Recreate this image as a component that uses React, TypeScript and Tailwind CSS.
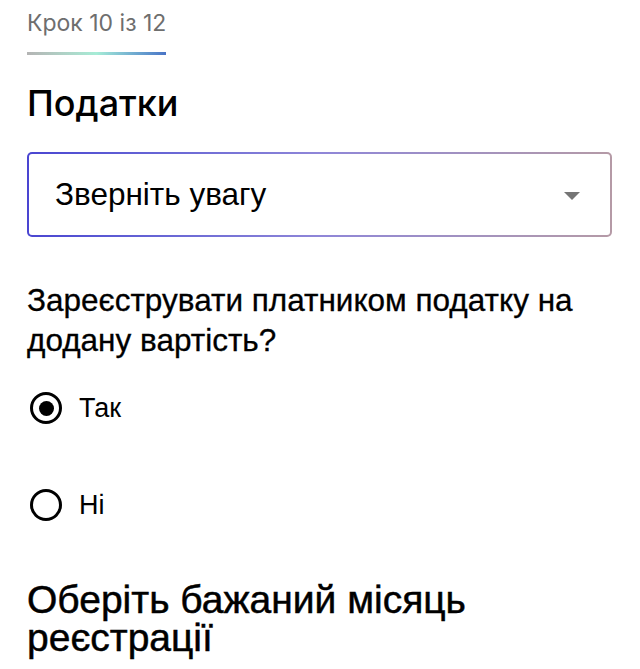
import React from "react";

export default function App() {
  return (
    <div className="min-h-[669px] w-[640px] bg-white px-[27px] pt-[8px]">
      <div className="font-['Inter',sans-serif] text-[23px] leading-[30px] text-[#6e6e6e]">Крок 10 із 12</div>
      <div className="mt-[14px] h-[3px] w-[139px] bg-linear-to-r from-[#b4b4b4] via-[#a6ecd6] to-[#4a74c6]" />
      <h1 className="mt-[26px] font-['Inter',sans-serif] text-[36px] font-medium leading-[44px] text-black">Податки</h1>
      <div className="mt-[27px] h-[85px] w-[585px] rounded-[5px] bg-linear-to-r from-[#4a45d1] via-[#8f86d8] to-[#b59aa6] p-[2px]">
        <div className="flex h-full w-full items-center justify-between rounded-[3px] bg-white pl-[26px] pr-[30px]">
          <span className="font-['Liberation_Sans',sans-serif] text-[31.5px] text-black">Зверніть увагу</span>
          <svg width="16" height="8" viewBox="0 0 16 8" className="mt-[2px]">
            <polygon points="0,0 16,0 8,8" fill="#757575" />
          </svg>
        </div>
      </div>
      <p className="mt-[43px] font-['Liberation_Sans',sans-serif] text-[31.5px] leading-[40px] text-black [-webkit-text-stroke:0.3px_black]">
        Зареєструвати платником податку на додану вартість?
      </p>
      <div className="mt-[32px] flex flex-col gap-[65px] font-['Liberation_Sans',sans-serif]">
        <label className="flex h-[32px] items-center gap-[17px]">
          <span className="ml-[3px] flex h-[32px] w-[32px] items-center justify-center rounded-full border-[3px] border-black">
            <span className="h-[15px] w-[15px] rounded-full bg-black" />
          </span>
          <span className="text-[27px] text-black">Так</span>
        </label>
        <label className="flex h-[32px] items-center gap-[17px]">
          <span className="ml-[3px] h-[32px] w-[32px] rounded-full border-[3px] border-black" />
          <span className="text-[27px] text-black">Ні</span>
        </label>
      </div>
      <h2 className="mt-[60px] font-['Liberation_Sans',sans-serif] text-[39px] font-medium leading-[38px] text-black [-webkit-text-stroke:0.5px_black]">
        Оберіть бажаний місяць реєстрації
      </h2>
    </div>
  );
}
